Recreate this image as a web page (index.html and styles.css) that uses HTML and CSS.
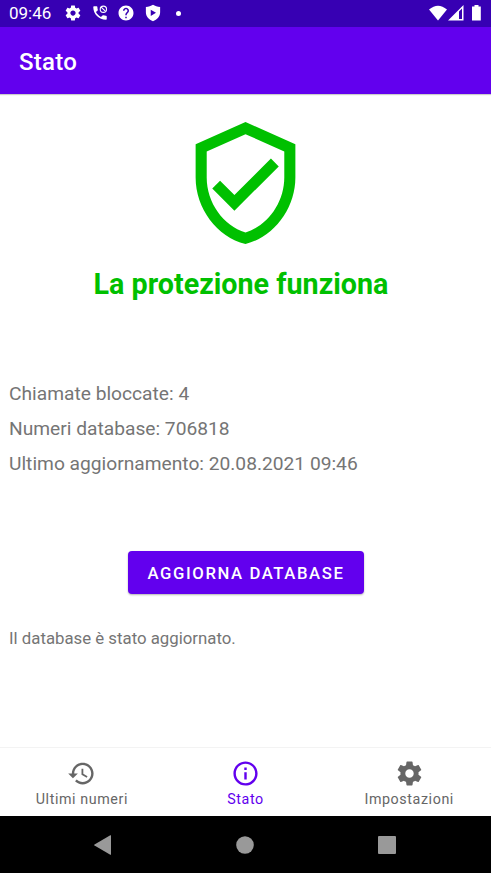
FILE: index.html
```html
<!DOCTYPE html>
<html lang="it">
<head>
<meta charset="utf-8">
<title>Stato</title>
<link rel="stylesheet" href="styles.css">
</head>
<body>
<svg class="defs" aria-hidden="true">
  <symbol id="gear" viewBox="0 0 24 24"><path d="M19.43 12.98c.04-.32.07-.64.07-.98s-.03-.66-.07-.98l2.11-1.65c.19-.15.24-.42.12-.64l-2-3.46c-.12-.22-.39-.3-.61-.22l-2.49 1c-.52-.4-1.08-.73-1.69-.98l-.38-2.65C14.46 2.18 14.25 2 14 2h-4c-.25 0-.46.18-.49.42l-.38 2.65c-.61.25-1.17.59-1.69.98l-2.49-1c-.23-.09-.49 0-.61.22l-2 3.46c-.13.22-.07.49.12.64l2.11 1.65c-.04.32-.07.65-.07.98s.03.66.07.98l-2.11 1.65c-.19.15-.24.42-.12.64l2 3.46c.12.22.39.3.61.22l2.49-1c.52.4 1.08.73 1.69.98l.38 2.65c.03.24.24.42.49.42h4c.25 0 .46-.18.49-.42l.38-2.65c.61-.25 1.17-.59 1.69-.98l2.49 1c.23.09.49 0 .61-.22l2-3.46c.12-.22.07-.49-.12-.64l-2.11-1.65zM12 15.5c-1.93 0-3.5-1.57-3.5-3.5s1.57-3.5 3.5-3.5 3.5 1.57 3.5 3.5-1.57 3.5-3.5 3.5z"/></symbol>
</svg>
<header class="status">
  <span class="clock">09:46</span>
  <div class="notices">
    <svg viewBox="0 0 24 24"><use href="#gear"/></svg>
    <svg viewBox="0 0 24 24"><path d="M20 15.5c-1.25 0-2.45-.2-3.57-.57-.35-.11-.74-.03-1.02.24l-2.2 2.2c-2.83-1.44-5.15-3.75-6.59-6.59l2.2-2.21c.28-.26.36-.65.25-1C8.700 6.450 8.500 5.250 8.500 4c0-.55-.45-1-1-1H4c-.55 0-1 .45-1 1 0 9.390 7.610 17 17 17 .55 0 1-.45 1-1v-3.500c0-.55-.45-1-1-1z"/><circle class="ring" cx="16.500" cy="7" r="4.200"/><path class="ring" d="M13.600 4.100l5.800 5.800"/></svg>
    <svg viewBox="0 0 24 24"><path d="M12 2C6.480 2 2 6.480 2 12s4.480 10 10 10 10-4.480 10-10S17.520 2 12 2zm1 17h-2v-2h2v2zm2.070-7.750l-.9.920C13.450 12.900 13 13.500 13 15h-2v-.5c0-1.100.45-2.100 1.170-2.830l1.240-1.260c.37-.36.59-.86.59-1.410 0-1.100-.9-2-2-2s-2 .9-2 2H8c0-2.210 1.790-4 4-4s4 1.790 4 4c0 .88-.36 1.680-.93 2.250z"/></svg>
    <svg viewBox="0 0 24 24"><path fill-rule="evenodd" d="M12 1C9.500 2.700 6 3.700 2.500 4v7c0 5.600 4 10 9.500 12 5.500-2 9.500-6.400 9.500-12V4C18 3.700 14.500 2.700 12 1zM9 7.500v8.500l7-4.250z"/></svg>
    <i class="more"></i>
  </div>
  <svg class="system" viewBox="0 0 53 18"><path d="M0 4.500Q9-3.100 18 4.500L9 15.500z"/><path fill-rule="evenodd" d="M19 15.500L34.500 0v15.500zM30 6.500v7.500h3V3.500z"/><path d="M45.500 0h4v1.500h2.300v14H43v-14h2.500z"/></svg>
</header>
<div class="appbar"><h1>Stato</h1></div>
<main>
  <svg class="shield" viewBox="0 0 24 24"><path d="M12 1L3 5v6c0 5.550 3.840 10.740 9 12 5.160-1.260 9-6.450 9-12V5l-9-4zm7 10c0 4.520-2.980 8.690-7 9.930-4.020-1.230-7-5.400-7-9.930V6.300l7-3.110 7 3.110V11zm-11.590.59L6 13l4 4 8-8-1.410-1.420L10 14.170z"/></svg>
  <h2>La protezione funziona</h2>
  <div class="stats">
    <p>Chiamate bloccate: 4</p>
    <p>Numeri database: 706818</p>
    <p>Ultimo aggiornamento: 20.08.2021 09:46</p>
  </div>
  <button class="update">AGGIORNA DATABASE</button>
  <p class="message">Il database è stato aggiornato.</p>
</main>
<nav class="tabs">
  <a class="tab"><svg viewBox="0 0 24 24"><path d="M13 3c-4.970 0-9 4.030-9 9H1l3.890 3.890.07.14L9 12H6c0-3.870 3.130-7 7-7s7 3.130 7 7-3.130 7-7 7c-1.930 0-3.680-.79-4.940-2.060l-1.420 1.420C8.270 19.990 10.510 21 13 21c4.970 0 9-4.030 9-9s-4.030-9-9-9zm-1 5v5l4.280 2.540.72-1.210-3.500-2.080V8H12z"/></svg><span>Ultimi numeri</span></a>
  <a class="tab active"><svg viewBox="0 0 24 24"><path d="M11 7h2v2h-2zm0 4h2v6h-2zm1-9C6.480 2 2 6.480 2 12s4.480 10 10 10 10-4.480 10-10S17.520 2 12 2zm0 18c-4.410 0-8-3.590-8-8s3.590-8 8-8 8 3.590 8 8-3.590 8-8 8z"/></svg><span>Stato</span></a>
  <a class="tab"><svg viewBox="0 0 24 24"><use href="#gear"/></svg><span>Impostazioni</span></a>
</nav>
<footer class="system-nav">
  <svg viewBox="0 0 20 20"><path d="M18 .6v18.800q0 .6-.7.3L1.500 10.600q-.9-.6 0-1.200L17.300.3q.7-.3.7.3z"/></svg>
  <svg viewBox="0 0 20 20"><circle cx="10" cy="10" r="8.800"/></svg>
  <svg viewBox="0 0 20 20"><rect x="1" y="1" width="18" height="18" rx="1"/></svg>
</footer>
</body>
</html>
```
FILE: styles.css
```css
* { box-sizing: border-box; }
body {
  margin: 0;
  height: 873px;
  display: flex;
  flex-direction: column;
  overflow: hidden;
  background: #fff;
  color: #757575;
  font-family: Roboto, sans-serif;
}
h1, h2, p { margin: 0; font-weight: 400; white-space: nowrap; }
svg { display: block; fill: currentColor; flex: none; }
.defs { display: none; }

.status {
  height: 27px;
  flex: none;
  display: flex;
  align-items: center;
  padding: 0 9px;
  background: #3700b3;
  color: #fff;
}
.clock { font-size: 17px; line-height: 27px; width: 55px; }
.notices { display: flex; align-items: center; gap: 8.500px; margin-top: -1px; }
.notices svg { width: 18px; height: 18px; }
.ring { fill: none; stroke: currentColor; stroke-width: 1.500; }
.more { width: 5px; height: 5px; margin-left: 6px; border-radius: 50%; background: #fff; }
.system { width: 53px; height: 18px; margin-left: auto; margin-top: 1px; }

.appbar {
  height: 67px;
  flex: none;
  padding-left: 19px;
  background: #6200ee;
  color: #fff;
  box-shadow: 0 1px 1px rgba(0, 0, 0, .2);
}
.appbar h1 { font-size: 24px; font-weight: 500; line-height: 70px; letter-spacing: .25px; }

main { flex: 1; display: flex; flex-direction: column; padding: 22px 9px 0; }
.shield { width: 133px; height: 134px; align-self: center; color: #00c000; }
h2 {
  margin-top: 15px;
  padding-right: 9px;
  color: #00c000;
  font-size: 28.700px;
  font-weight: 700;
  line-height: 38px;
  text-align: center;
}
.stats { margin-top: 73px; font-size: 19.200px; line-height: 35px; }
.update {
  align-self: center;
  width: 236px;
  height: 43px;
  margin-top: 70px;
  padding: 0 0 0 1px;
  border: 0;
  border-radius: 4px;
  background: #6200ee;
  color: #fff;
  font: 500 16.700px/45px Roboto, sans-serif;
  letter-spacing: 1.580px;
  white-space: nowrap;
  box-shadow: 0 1px 2px rgba(0, 0, 0, .3);
}
.message { margin-top: 33px; font-size: 16.800px; line-height: 22px; }

.tabs { height: 69px; flex: none; display: flex; border-top: 1px solid #f3f3f3; }
.tab {
  flex: 1;
  display: flex;
  flex-direction: column;
  align-items: center;
  padding-top: 10.500px;
  color: #666;
  font-size: 14.300px;
  line-height: 18px;
  letter-spacing: .58px;
}
.tab svg { width: 29px; height: 29px; margin-bottom: 2.500px; }
.active { color: #6200ee; }

.system-nav {
  height: 57px;
  flex: none;
  display: flex;
  justify-content: center;
  gap: 122px;
  padding: 19px 1px 0 0;
  background: #000;
  color: #999;
}
.system-nav svg { width: 20px; height: 20px; }
```
